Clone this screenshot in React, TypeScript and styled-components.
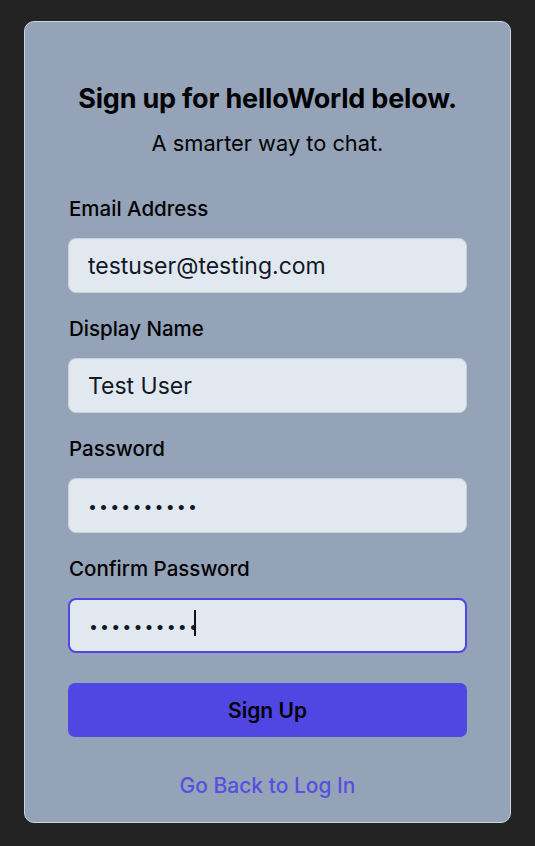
import React from "react";
import styled, { createGlobalStyle } from "styled-components";

const GlobalStyle = createGlobalStyle`
  html, body { margin: 0; padding: 0; background: #232323; }
  body { font-family: Inter, "Noto Sans", sans-serif; }
  * { box-sizing: border-box; }
`;

const Page = styled.div`
  min-height: 846px;
  padding: 21px 24px 23px 24px;
  display: flex;
  justify-content: center;
`;

const Card = styled.form`
  width: 487px;
  height: 802px;
  background: #94a3b8;
  border: 1px solid #ccd4e0;
  border-radius: 10px;
  padding: 61px 43px 0 43px;
  display: flex;
  flex-direction: column;
  align-items: stretch;
`;

const Title = styled.h1`
  margin: 0;
  font-size: 27px;
  line-height: 32px;
  font-weight: 700;
  color: #000;
  text-align: center;
  letter-spacing: -0.2px;
`;

const Subtitle = styled.p`
  margin: 14px 0 38px 0;
  font-size: 21.8px;
  line-height: 28px;
  color: #000;
  text-align: center;
`;

const Field = styled.div`
  display: flex;
  flex-direction: column;
  margin-bottom: 22px;
`;

const Label = styled.label`
  font-size: 20.5px;
  line-height: 28px;
  color: #000;
  font-weight: 500;
  margin-bottom: 15px;
  padding-left: 1px;
`;

const InputWrap = styled.div`
  position: relative;
`;

const Input = styled.input<{ $focused?: boolean; $secret?: boolean }>`
  display: block;
  width: 100%;
  height: 55px;
  border-radius: 8px;
  background: #e2e8f0;
  border: ${(p) => (p.$focused ? "2px solid #4f46e5" : "1px solid #c9d1dc")};
  padding: 0 19px;
  font-family: Inter, "Noto Sans", sans-serif;
  font-size: ${(p) => (p.$secret ? "16px" : "23px")};
  color: #111827;
  letter-spacing: ${(p) => (p.$secret ? "2.1px" : "0")};
  outline: none;
`;

const Caret = styled.span`
  position: absolute;
  left: 126px;
  top: 12px;
  width: 1.5px;
  height: 26px;
  background: #111;
`;

const Button = styled.button`
  margin-top: 8px;
  height: 54px;
  border: none;
  border-radius: 7px;
  background: #5046e4;
  color: #000;
  font-family: Inter, "Noto Sans", sans-serif;
  font-size: 21px;
  font-weight: 600;
  cursor: pointer;
`;

const BackLink = styled.a`
  margin-top: 35px;
  text-align: center;
  font-size: 21px;
  line-height: 28px;
  font-weight: 500;
  color: #5550e0;
  text-decoration: none;
`;

const fields = [
  { label: "Email Address", value: "testuser@testing.com", type: "text" },
  { label: "Display Name", value: "Test User", type: "text" },
  { label: "Password", value: "1234567890", type: "password" },
  { label: "Confirm Password", value: "1234567890", type: "password", focused: true },
];

export default function App() {
  return (
    <>
      <GlobalStyle />
      <Page>
        <Card onSubmit={(e) => e.preventDefault()}>
          <Title>Sign up for helloWorld below.</Title>
          <Subtitle>A smarter way to chat.</Subtitle>
          {fields.map((f) => (
            <Field key={f.label}>
              <Label>{f.label}</Label>
              <InputWrap>
                <Input
                  type={f.type}
                  defaultValue={f.value}
                  readOnly
                  $focused={f.focused}
                  $secret={f.type === "password"}
                />
                {f.focused && <Caret />}
              </InputWrap>
            </Field>
          ))}
          <Button type="submit">Sign Up</Button>
          <BackLink href="#">Go Back to Log In</BackLink>
        </Card>
      </Page>
    </>
  );
}
